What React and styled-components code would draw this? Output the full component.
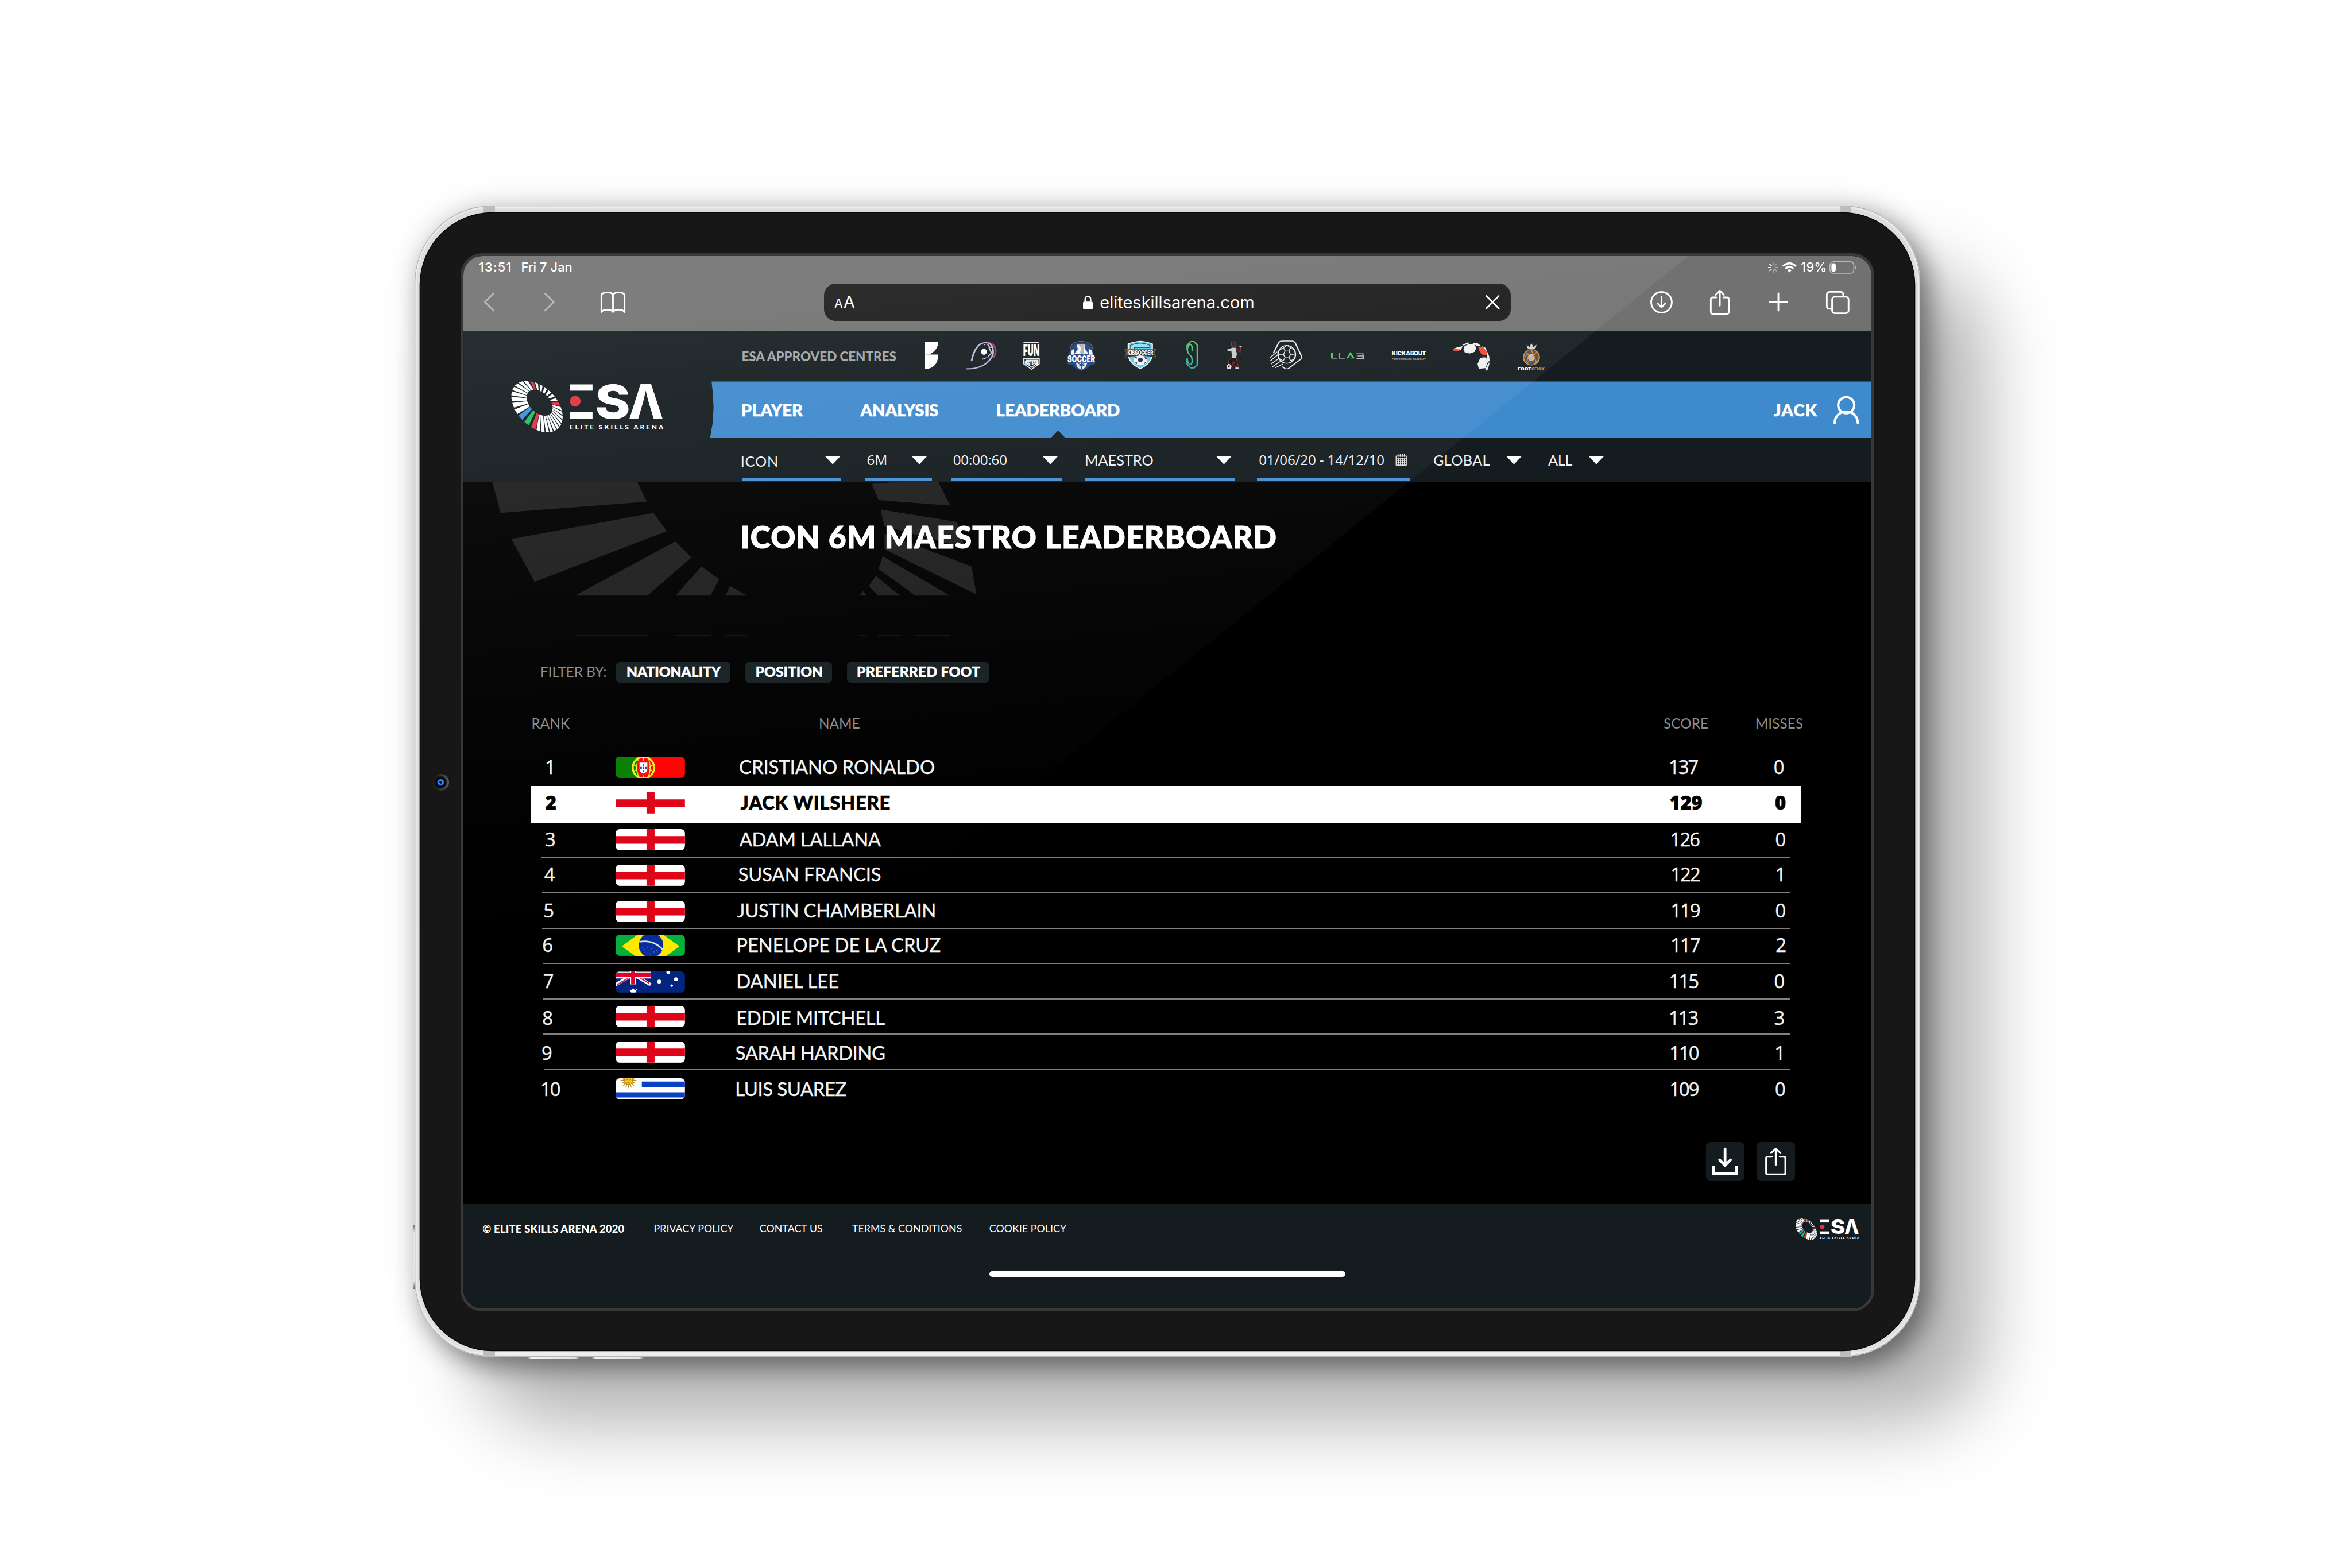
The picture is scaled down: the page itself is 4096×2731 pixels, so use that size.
import React from 'react';
import styled, { createGlobalStyle, css } from 'styled-components';

/* 10 design units = 1rem */
const u = (n) => `${n / 10}rem`;

const SANS = '"Lato", "Liberation Sans", sans-serif';
const DIGITS = '"Open Sans", "Liberation Sans", sans-serif';
const SYSTEM = '"Inter", "Liberation Sans", sans-serif';

const Global = createGlobalStyle`
  html { font-size: 6.826667px; }
  body { margin: 0; background: #fff; overflow: hidden; }
  *, *::before, *::after { box-sizing: border-box; }
  svg { display: block; }
`;

/* ---------- device ---------- */

const Page = styled.div`
  width: 100vw;
  height: 100vh;
  padding: ${u(525)} 0 0 ${u(1058)};
  background: #fff;
`;

const Frame = styled.div`
  position: relative;
  width: ${u(3840)};
  height: ${u(2937)};
  padding: ${u(18)} ${u(14)} ${u(17)};
  border-radius: ${u(196)};
  background: linear-gradient(#c9c9c9 0, #f6f6f6 ${u(5)}, #dcdcde ${u(9)}, #e0e0e2 ${u(2922)}, #f4f4f4 ${u(2930)}, #a8a8a8 100%);
  box-shadow:
    inset 0 0 0 ${u(2)} #b4b4b4,
    inset 0 0 ${u(2)} ${u(6)} #ececec,
    0 0 ${u(80)} rgba(0, 0, 0, 0.15),
    ${u(22)} ${u(26)} ${u(60)} rgba(0, 0, 0, 0.36),
    ${u(160)} ${u(165)} ${u(195)} rgba(0, 0, 0, 0.31);
`;

const Band = styled.i`
  position: absolute;
  width: ${u(28)};
  height: ${u(17)};
  background: #bdbdbf;
  ${(p) => p.$side}: ${u(176)};
  ${(p) => p.$edge}: 0;
`;

const BottomKey = styled.i`
  position: absolute;
  top: 100%;
  left: ${(p) => u(p.$x)};
  width: ${u(133)};
  height: ${u(6)};
  background: linear-gradient(90deg, #777, #f2f2f2 8%, #e2e2e2 92%, #777);
`;

const SideKey = styled.i`
  position: absolute;
  right: 100%;
  top: ${u(2599)};
  width: ${u(5)};
  height: ${u(164)};
  background: linear-gradient(#666, #e4e4e4 12%, #e4e4e4 88%, #666);
`;

const Bezel = styled.div`
  position: relative;
  width: 100%;
  height: 100%;
  padding: ${u(103)} 0 0 ${u(103)};
  border-radius: ${u(184)};
  background: #171717;
  box-shadow: 0 0 0 ${u(2)} #050505;
`;

const Camera = styled.i`
  position: absolute;
  left: ${u(31)};
  top: ${u(1432)};
  width: ${u(42)};
  height: ${u(42)};
  border-radius: 50%;
  background:
    radial-gradient(circle, #0b0b0b 0 9%, #4aa0ff 14%, #1f6fe8 24%, #080808 32%, #0a0a0a 46%, transparent 54%),
    linear-gradient(90deg, #1b1b1b 20%, #565656 95%);
`;

const Screen = styled.div`
  position: relative;
  display: flex;
  flex-direction: column;
  width: ${u(3606)};
  height: ${u(2699)};
  border: ${u(7.5)} solid #383838;
  border-radius: ${u(56)};
  background: #000;
  overflow: hidden;
`;

const Glare = styled.div`
  position: absolute;
  inset: 0;
  pointer-events: none;
  clip-path: polygon(0 0, ${u(3125)} 0, 0 ${u(2524)});
  background: linear-gradient(
    174deg,
    rgba(255, 255, 255, 0.085) ${u(150)},
    rgba(255, 255, 255, 0.058) ${u(420)},
    rgba(255, 255, 255, 0.038) ${u(760)},
    rgba(255, 255, 255, 0.016) ${u(1250)},
    rgba(255, 255, 255, 0) ${u(1750)}
  );
`;

/* ---------- browser chrome ---------- */

const Chrome = styled.div`
  flex: none;
  height: ${u(192)};
  background: #717171;
  color: #fff;
  font-family: ${SYSTEM};
`;

const StatusBar = styled.div`
  display: flex;
  align-items: center;
  height: ${u(58)};
  padding: 0 ${u(37)} 0 ${u(39)};
  font-size: ${u(32)};
  font-weight: 500;
  line-height: 1;
  white-space: nowrap;
`;

const Clock = styled.span`
  letter-spacing: ${u(1.8)};
  margin-right: ${u(23)};
`;

const StatusDate = styled.span`
  letter-spacing: ${u(0.1)};
  margin-right: auto;
`;

const Charge = styled.span`
  margin: 0 ${u(7)} 0 ${u(11)};
  letter-spacing: ${u(0.6)};
`;

const Glyph = styled.svg`
  flex: none;
  width: ${(p) => u(p.$w)};
  height: ${(p) => u(p.$h)};
  margin-left: ${(p) => u(p.$ml || 0)};
  overflow: visible;
  fill: none;
  stroke: ${(p) => p.$c || '#fff'};
  stroke-width: ${(p) => p.$sw || 4.2};
  stroke-linecap: round;
  stroke-linejoin: round;
`;

const Toolbar = styled.div`
  display: grid;
  grid-template-columns: 1fr ${u(1751)} 1fr;
  align-items: center;
  height: ${u(120)};
`;

const ToolsLeft = styled.div`
  display: flex;
  align-items: center;
  padding-left: ${u(53)};
`;

const ToolsRight = styled.div`
  display: flex;
  align-items: center;
  justify-content: flex-end;
  padding-right: ${u(56)};
`;

const AddressBar = styled.div`
  display: grid;
  grid-template-columns: 1fr auto 1fr;
  align-items: center;
  height: ${u(96)};
  padding: 0 ${u(28)} 0 ${u(26)};
  border-radius: ${u(30)};
  background: #191919;
`;

const ReaderButton = styled.span`
  display: flex;
  align-items: baseline;
  gap: ${u(2)};
  font-size: ${u(42)};
  line-height: 1;
  small { font-size: ${u(31)}; }
`;

const Address = styled.span`
  display: flex;
  align-items: center;
  gap: ${u(18)};
  padding-left: ${u(9)};
  font-size: ${u(42.5)};
  line-height: 1;
`;

const Clear = styled(Glyph)`
  justify-self: end;
`;

/* ---------- site header ---------- */

const Header = styled.header`
  flex: none;
  display: grid;
  grid-template-columns: ${u(629)} 1fr;
  height: ${u(383)};
  background: #141c1f;
  color: #fff;
  font-family: ${SANS};
`;

const LogoSlot = styled.div`
  padding: ${u(105)} 0 0 ${u(108)};
`;

const LogoSvg = styled.svg`
  width: ${(p) => u(p.$w)};
  height: ${(p) => u((p.$w * 510) / 1260)};
`;

const HeaderRows = styled.div`
  display: grid;
  grid-template-rows: ${u(128)} ${u(145)} ${u(110)};
`;

const Partners = styled.div`
  display: flex;
  align-items: flex-start;
  padding-left: ${u(80.5)};
`;

const PartnersLabel = styled.span`
  width: ${u(393)};
  padding-top: ${u(49)};
  font-size: ${u(33)};
  font-weight: 900;
  line-height: 1;
  letter-spacing: ${u(-0.1)};
  white-space: nowrap;
  color: #a5a5a5;
`;

const PartnerSvg = styled.svg`
  flex: none;
  width: ${(p) => u(p.$w)};
  height: ${u(76)};
  margin: ${u(25)} 0 0 ${(p) => u(p.$gap)};
  overflow: visible;
`;

const Nav = styled.nav`
  display: flex;
  align-items: stretch;
  padding: 0 ${u(32)} 0 ${u(79.5)};
  background: #3f8acd;
  clip-path: polygon(${u(4)} 0, ${u(7)} 20%, ${u(9)} 45%, ${u(7)} 72%, 0 100%, 100% 100%, 100% 0);
  font-size: ${u(43)};
  font-weight: 900;
  line-height: 1;
  -webkit-text-stroke: ${u(0.9)} #fff;
`;

const NavItem = styled.a`
  position: relative;
  display: flex;
  align-items: center;
  margin-right: ${(p) => u(p.$after || 0)};
  ${(p) =>
    p.$active &&
    css`
      &::after {
        content: '';
        position: absolute;
        left: 50%;
        bottom: 0;
        width: ${u(39)};
        height: ${u(20)};
        margin-left: ${u(-19.5)};
        background: #141c1f;
        clip-path: polygon(50% 0, 100% 100%, 0 100%);
      }
    `}
`;

const User = styled.div`
  display: flex;
  align-items: center;
  gap: ${u(40)};
  margin-left: auto;
  letter-spacing: ${u(1.6)};
`;

const Filters = styled.div`
  display: flex;
  padding-left: ${u(81)};
`;

const Select = styled.div`
  display: flex;
  align-items: center;
  justify-content: space-between;
  width: ${(p) => u(p.$w)};
  margin-right: ${(p) => u(p.$after || 0)};
  padding: ${u(9)} ${(p) => u(p.$r || 0)} 0 ${(p) => u(p.$l || 0)};
  border-bottom: ${u(8)} solid ${(p) => (p.$line ? '#4390d6' : 'transparent')};
  font-family: ${(p) => (p.$digits ? DIGITS : SANS)};
  font-size: ${(p) => u(p.$digits ? 35.5 : 37)};
  letter-spacing: ${(p) => u(p.$ls || 0)};
  line-height: 1;
  white-space: nowrap;
  color: #f2f2f2;
`;

const SelectLabel = styled.span`
  padding-top: ${(p) => u(p.$drop || 0)};
  margin-left: ${(p) => u(p.$ml || 0)};
`;

const Caret = styled.i`
  width: ${u(40)};
  height: ${u(21)};
  background: #fff;
  clip-path: polygon(0 0, 100% 0, 50% 100%);
`;

/* ---------- content ---------- */

const Main = styled.main`
  position: relative;
  flex: none;
  height: ${u(1844)};
  padding: ${u(102)} ${u(177)} 0 ${u(171)};
  font-family: ${SANS};
  color: #f4f4f4;
`;

const Watermark = styled.svg`
  position: absolute;
  left: ${u(-22)};
  top: 0;
  width: ${u(1500)};
  height: ${u(393)};
  fill: #1f1f1f;
`;

const Title = styled.h1`
  position: relative;
  margin: 0 0 0 ${u(535.5)};
  font-size: ${u(78)};
  font-weight: 900;
  line-height: 1;
  letter-spacing: ${u(1.75)};
  white-space: nowrap;
  color: #fff;
  -webkit-text-stroke: ${u(1.8)} #fff;
`;

const FilterBar = styled.div`
  display: flex;
  align-items: center;
  height: ${u(53)};
  margin: ${u(280)} 0 0 ${u(25)};
`;

const FilterLabel = styled.span`
  width: ${u(193)};
  font-size: ${u(35.5)};
  line-height: 1;
  white-space: nowrap;
  color: #8c8c8c;
`;

const Chip = styled.button`
  height: ${u(53)};
  width: ${(p) => u(p.$w)};
  margin: 0 ${u(38.5)} 0 0;
  padding: 0 0 ${u(2)} ${u(2)};
  border: 0;
  border-radius: ${u(10)};
  background: #172023;
  font: 900 ${u(36)} / 1 ${SANS};
  letter-spacing: ${(p) => u(p.$ls || 0)};
  color: #fff;
  -webkit-text-stroke: ${u(0.8)} #fff;
`;

const TableHead = styled.div`
  display: grid;
  grid-template-columns: ${u(733)} 1fr ${u(234)} ${u(121)};
  height: ${u(36)};
  margin: ${u(87)} ${u(-2)} ${u(45)} ${u(2.5)};
  font-size: ${u(35.5)};
  line-height: 1;
  letter-spacing: ${u(0.2)};
  color: #8c8c8c;
`;

const Row = styled.div`
  display: grid;
  grid-template-columns: ${(p) => u(215 - p.$inset)} ${u(306)} 1fr ${u(270)} ${(p) => u(p.$inset ? 42 : 70)};
  align-items: center;
  height: ${(p) => u(p.$h)};
  margin: 0 ${(p) => u(p.$inset ? 30 : 2)} 0 ${(p) => u(p.$inset + 2)};
  border-bottom: ${(p) => (p.$line ? u(4) : '0')} solid #808080;
  font-size: ${u(48)};
  line-height: 1;
  white-space: nowrap;
  -webkit-text-stroke: ${u(0.6)} currentColor;
  ${(p) =>
    p.$current &&
    css`
      background: #fff;
      color: #000;
      font-weight: 900;
      -webkit-text-stroke: ${u(1)} #000;
    `}
`;

const Name = styled.span`
  padding: ${(p) => u(Math.max(0, 2 * p.$dy))} 0 ${(p) => u(Math.max(0, -2 * p.$dy))};
  text-indent: ${(p) => u(p.$x)};
  letter-spacing: ${(p) => u(p.$ls)};
`;

const Digits = styled.span`
  padding: ${(p) => u(Math.max(0, 2 * p.$dy))} 0 ${(p) => u(Math.max(0, -2 * p.$dy))};
  text-indent: ${(p) => u(p.$x)};
  font-family: ${DIGITS};
  font-weight: ${(p) => (p.$bold ? 800 : 500)};
  letter-spacing: ${(p) => u(p.$bold ? 0 : -2.8)};
`;

const FlagBox = styled.span`
  display: block;
  width: ${u(177)};
  height: ${u(54)};
  margin-top: ${(p) => u(p.$dy)};
  border-radius: ${u(11)};
  overflow: hidden;
  svg { width: 100%; height: 100%; }
`;

const Actions = styled.div`
  display: flex;
  gap: ${u(30)};
  justify-content: flex-end;
  margin: ${u(93)} ${u(17)} 0 0;
`;

const Action = styled.button`
  display: flex;
  align-items: center;
  justify-content: center;
  width: ${u(99)};
  height: ${u(100)};
  padding: 0;
  border: 0;
  border-radius: ${u(11)};
  background: #141c1f;
`;

const Footer = styled.footer`
  flex: 1;
  background: #141c1f;
`;

const FooterRow = styled.div`
  display: flex;
  align-items: center;
  height: ${u(126)};
  padding: 0 ${u(24)} 0 ${u(48.5)};
  font: 400 ${u(26)} / 1 ${SANS};
  letter-spacing: ${u(0.1)};
  color: #fff;
`;

const Copyright = styled.strong`
  width: ${u(437)};
  font-size: ${u(27)};
  font-weight: 900;
  letter-spacing: ${u(0.3)};
`;

const FooterLink = styled.a`
  width: ${(p) => u(p.$w)};
  white-space: nowrap;
`;

const FooterLogo = styled.div`
  margin-left: auto;
`;

const HomeBar = styled.div`
  width: ${u(909)};
  height: ${u(15)};
  margin: ${u(45)} auto 0;
  border-radius: ${u(8)};
  background: #fff;
`;

/* ---------- ESA logo ---------- */

const ringPoint = (cx, cy, a, b, deg) => {
  const t = (deg * Math.PI) / 180;
  const p = a * Math.cos(t);
  const q = b * Math.sin(t);
  return `${(cx + (p - q) * Math.SQRT1_2).toFixed(1)},${(cy + (p + q) * Math.SQRT1_2).toFixed(1)}`;
};

const RED = '#df3340';
const ringSegments = (() => {
  const out = [];
  const add = (t, w, shift, c = '#fff') => out.push({ t, w, shift, c });
  add(65, 10.5, 0, RED);
  add(81, 10.5, 1, '#22bf63');
  add(97.5, 11, 1, '#3f8fd6');
  for (let i = 1; i < 9; i += 1) add(97.5 + i * 14.2, 10.6, 1 - i * 1.1);
  add(225.5, 7.5, -9, RED);
  for (let i = 1; i < 7; i += 1) add(225.5 + i * 10.3, 6.6, -9 + i * 2.6);
  add(297.5, 7.5, 9, RED);
  for (let i = 1; i < 12; i += 1) add(297.5 + i * 10.6, 7.8, 9 - i * 0.75);
  return out;
})();

const Logo = ({ width }) => (
  <LogoSvg $w={width} viewBox="0 0 1260 510">
    {ringSegments.map(({ t, w, shift, c }) => (
      <polygon
        key={t}
        fill={c}
        points={[
          ringPoint(238, 260, 233, 152, t - w / 2),
          ringPoint(238, 260, 233, 152, t + w / 2),
          ringPoint(258, 230, 118, 77, t + shift + w / 2),
          ringPoint(258, 230, 118, 77, t + shift - w / 2),
        ].join(' ')}
      />
    ))}
    <rect x="490" y="90" width="173" height="48" fill="#fff" />
    <rect x="490" y="301" width="173" height="51" fill="#fff" />
    <circle cx="531" cy="219" r="41" fill={RED} />
    <text x="682" y="350" fontFamily="Inter, sans-serif" fontWeight="800" fontSize="358" fill="#fff" textLength="270" lengthAdjust="spacingAndGlyphs">S</text>
    <text x="938" y="352" fontFamily="Inter, sans-serif" fontWeight="800" fontSize="360" fill="#fff" textLength="268" lengthAdjust="spacingAndGlyphs">Λ</text>
    <text x="487" y="437" fontFamily="Lato, sans-serif" fontWeight="900" fontSize="52" fill="#fff" letterSpacing="13">ELITE SKILLS ARENA</text>
  </LogoSvg>
);

/* ---------- partner marks ---------- */

const Lettering = ({ x, y, w, size, children, fill = '#fff', font = 'Lato', weight = 900 }) => (
  <text x={x} y={y} textLength={w} lengthAdjust="spacingAndGlyphs" fontFamily={`${font}, sans-serif`} fontWeight={weight} fontSize={size} fill={fill} stroke="none">
    {children}
  </text>
);

const PartnerStrip = () => (
  <>
    <PartnerSvg $w={33.5} $gap={75} viewBox="55 60 63 228" preserveAspectRatio="none">
      <path fill="#fff" d="M55 67H118Q118 128 76 163H118Q118 250 72 271H55Z" />
      <path d="M60 165H92" stroke="#9a9fa1" strokeWidth="4" />
    </PartnerSvg>
    <PartnerSvg $w={79.5} $gap={69} viewBox="248 60 150 228" preserveAspectRatio="none" fill="none">
      <path d="M356 70Q395 84 394 136Q394 165 382 188" stroke="#a8385f" strokeWidth="9" />
      <path d="M278 214C286 150 305 74 345 72C385 72 390 150 372 190C352 240 318 274 252 273" stroke="#b9b7dc" strokeWidth="8" />
      <path d="M338 90Q345 80 356 86L366 108L384 110M362 110L374 150L358 180M330 200L348 188L364 190" stroke="#cfcdea" strokeWidth="6" />
      <ellipse cx="338" cy="142" rx="14" ry="23" fill="#fff" />
    </PartnerSvg>
    <PartnerSvg $w={41} $gap={68.5} viewBox="527 60 78 228" preserveAspectRatio="none" fill="none">
      <path d="M528 71H605M530 194H604V236L567 276L530 236ZM541 206H594V232L567 260L541 232Z" stroke="#e8e8e8" strokeWidth="6" />
      <Lettering x={526} y={176} w={80} size={124} font="Inter">FUN</Lettering>
      <Lettering x={534} y={240} w={66} size={42} font="Inter">FOOTBALL</Lettering>
    </PartnerSvg>
    <PartnerSvg $w={70.5} $gap={71.5} viewBox="740 60 133 228" preserveAspectRatio="none" fill="none">
      <path d="M752 118Q762 62 806 62Q852 62 864 118" stroke="#5d646b" strokeWidth="5" />
      <path d="M807 70C850 70 868 130 866 170L874 236L850 244Q838 276 807 286Q776 276 764 244L740 236L748 170C746 130 764 70 807 70Z" fill="#1f3f7c" />
      <path d="M784 88H826L824 118L842 160H772L790 122ZM760 132L772 120V164H756ZM842 118L858 134L862 164H842Z" fill="#f4f4f4" />
      <path d="M792 84L822 84L818 166L800 150L806 114Z" fill="#b2b2b2" />
      <path d="M744 172H870V222H744Z" fill="#1f3f7c" />
      <path d="M780 226H836L826 262L807 280L788 262Z" fill="#dfe6f3" />
      <path d="M792 232L822 250M820 232L794 252M807 228V278" stroke="#1f3f7c" strokeWidth="5" />
      <Lettering x={740} y={222} w={133} size={72} font="Inter">SOCCER</Lettering>
    </PartnerSvg>
    <PartnerSvg $w={82} $gap={75} viewBox="1015 60 155 228" preserveAspectRatio="none" fill="none">
      <path d="M1092 62Q1120 64 1150 82V178Q1136 240 1092 272Q1048 240 1034 178V82Q1064 64 1092 62Z" fill="#5fc8e4" stroke="#e9f6fa" strokeWidth="6" />
      <path d="M1046 92Q1092 62 1138 92V110H1062V124H1046Z" fill="#8fe2f4" stroke="#20262b" strokeWidth="4" />
      <path d="M1016 124H1168L1158 150L1168 184L1092 170L1018 184L1026 150Z" fill="#23292e" stroke="#5a6167" strokeWidth="3" />
      <ellipse cx="1092" cy="208" rx="33" ry="38" fill="#f2f4f8" />
      <path d="M1080 196L1094 186L1106 198L1100 220H1084ZM1062 188L1074 180L1076 194ZM1112 180L1124 190L1118 206ZM1066 218L1078 226L1074 238ZM1108 228L1118 222L1112 238Z" fill="#20264f" />
      <Lettering x={1030} y={164} w={124} size={46} font="Inter">KISSOCCER</Lettering>
    </PartnerSvg>
    <PartnerSvg $w={30} $gap={76} viewBox="1313 60 57 228" preserveAspectRatio="none" fill="none">
      <defs>
        <linearGradient id="sg" x1="0" y1="0" x2="0" y2="1">
          <stop offset="0" stopColor="#4ecb5c" />
          <stop offset="1" stopColor="#35aeb4" />
        </linearGradient>
      </defs>
      <path d="M1341 136V104Q1336 80 1330 84Q1318 100 1318 128Q1320 156 1336 176Q1344 200 1340 226Q1336 246 1330 238Q1318 230 1317 190M1317 190V238L1334 266H1350L1366 242V92L1350 64H1334L1317 92V128" stroke="url(#sg)" strokeWidth="7" />
    </PartnerSvg>
    <PartnerSvg $w={38} $gap={73} viewBox="0 60 72 228" preserveAspectRatio="none" fill="none">
      <path d="M22 82Q24 62 34 64Q46 66 46 92Q42 108 36 108Q24 108 22 82" stroke="#a92a2a" strokeWidth="4" fill="#2a2224" />
      <path d="M2 126L28 110L44 112L50 160L46 188H26L24 140L6 136Z" fill="#c9c9c9" />
      <path d="M50 120L66 144L68 96" stroke="#9c2b2b" strokeWidth="4" />
      <circle cx="68" cy="102" r="6" fill="#cfcfcf" />
      <path d="M26 190H46L58 258H44L34 210L26 250H8L12 204Z" fill="#101010" stroke="#a32626" strokeWidth="3" />
      <ellipse cx="12" cy="256" rx="12" ry="20" fill="#e2e2e2" />
      <path d="M44 260L60 264V272H42Z" fill="#d5d5d5" />
      <path d="M6 248L16 246L14 264L8 262Z" fill="#222" />
    </PartnerSvg>
    <PartnerSvg $w={84} $gap={72} viewBox="203 60 159 228" preserveAspectRatio="none" fill="none" stroke="#ececec">
      <path d="M222 150L248 70Q252 60 262 60H312Q322 62 326 72L356 172Q360 184 356 196L296 268Q288 278 278 270L262 256" strokeWidth="6.5" />
      <ellipse cx="286" cy="162" rx="42" ry="68" strokeWidth="6.5" />
      <path d="M278 136H296L304 162L296 188H278L270 162ZM278 136L270 112L282 98M296 136L304 112L292 98M304 162L324 162M270 162L248 162M278 188L268 212M296 188L306 212M304 112L322 128M270 112L252 128M268 212L252 196M306 212L320 196" strokeWidth="4.5" />
      <path d="M204 188L240 142M206 212L244 164M210 236L250 190M216 258L258 212M230 264L268 236" strokeWidth="5.5" />
    </PartnerSvg>
    <PartnerSvg $w={85} $gap={73} viewBox="500 60 161 228" preserveAspectRatio="none" fill="none">
      <path d="M504 150V192M540 150V192M578 192L594 154L610 192" stroke="#45d957" strokeWidth="8" />
      <path d="M502 194H530M538 194H566M592 190H614M622 153H654V194H622M624 174H656" stroke="#77717b" strokeWidth="7" />
      <path d="M630 174H658V194H626" stroke="#b9b9b9" strokeWidth="6" />
    </PartnerSvg>
    <PartnerSvg $w={86.5} $gap={69.5} viewBox="792 60 163 228" preserveAspectRatio="none">
      <Lettering x={791} y={168} w={165} size={45} font="Inter">KICKABOUT</Lettering>
      <path d="M792 182H955" stroke="#6d7375" strokeWidth="3" />
      <Lettering x={792} y={205} w={163} size={17} fill="#a5a8a9" font="Inter" weight={600}>PERFORMANCE ACADEMY</Lettering>
    </PartnerSvg>
    <PartnerSvg $w={94.5} $gap={69.5} viewBox="1087 60 178 228" preserveAspectRatio="none">
      <path fill="#f1f1f1" d="M1088 122L1110 106L1134 100L1126 128L1104 124ZM1132 90L1160 70L1168 76L1140 94ZM1144 98L1166 82L1190 84L1200 112L1192 142L1168 156L1144 146L1138 120ZM1178 74H1204L1224 98L1206 100ZM1228 100L1244 112L1262 176L1264 214L1252 220L1250 160ZM1218 192L1246 184L1256 218L1244 268L1212 272L1206 236ZM1258 226L1264 226L1256 276L1244 290L1244 276Z" />
      <path fill="#f4482d" d="M1088 122L1124 124L1116 136L1088 134ZM1210 102L1232 104L1252 142L1248 170L1232 168L1212 132ZM1228 176L1248 180V190H1230Z" />
    </PartnerSvg>
    <PartnerSvg $w={69} $gap={70} viewBox="1397 60 130 228" preserveAspectRatio="none" fill="none">
      <path fill="#cfd2d3" d="M1440 88L1454 108L1458 92L1463 76L1468 92L1472 108L1488 88L1482 122H1446Z" />
      <ellipse cx="1463" cy="184" rx="38" ry="60" fill="#4d4f52" stroke="#e08a2c" strokeWidth="6" />
      <ellipse cx="1463" cy="186" rx="17" ry="26" fill="#bfc0c2" />
      <path d="M1434 150L1452 160L1440 220M1490 140L1440 236M1462 126L1488 224M1430 180L1450 160M1476 236L1500 200" stroke="#e08a2c" strokeWidth="4.5" />
      <Lettering x={1397} y={286} w={66} size={30} font="Inter">FOOT</Lettering>
      <Lettering x={1463} y={286} w={42} size={30} fill="#7f8486" font="Inter">GEN</Lettering>
      <Lettering x={1505} y={286} w={22} size={30} fill="#e08a2c" font="Inter">IK</Lettering>
    </PartnerSvg>
  </>
);

/* ---------- flags ---------- */

const England = () => (
  <svg viewBox="0 0 177 54" preserveAspectRatio="none">
    <rect width="177" height="54" fill="#fff" />
    <path fill="#e00418" d="M0 18H177V37.5H0ZM79 0H99.5V54H79Z" />
  </svg>
);

const Portugal = () => (
  <svg viewBox="0 0 178 54" preserveAspectRatio="none">
    <rect width="178" height="54" fill="#ff0201" />
    <rect width="58" height="54" fill="#068004" />
    <circle cx="71.5" cy="28" r="27.5" fill="none" stroke="#f4ec20" strokeWidth="5" />
    <path d="M46 20Q71 42 97 20M46 38Q71 18 97 38M71.5 0V54M60 3Q48 28 60 52M83 3Q95 28 83 52" fill="none" stroke="#f4ec20" strokeWidth="2.6" />
    <path d="M56 10H87V32Q85 46 71.5 48Q58 46 56 32Z" fill="#f01018" />
    <path d="M61.5 15H81.5V32Q80 41 71.5 43Q63 41 61.5 32Z" fill="#fff" />
    <path d="M69.5 18h4v5h-4zM69.5 26h4v5h-4zM69.5 34h4v5h-4zM63.5 26h4v5h-4zM75.5 26h4v5h-4z" fill="#1741b0" />
  </svg>
);

const Brazil = () => (
  <svg viewBox="0 0 178 54" preserveAspectRatio="none">
    <rect width="178" height="54" fill="#04b13c" />
    <path d="M16 29.5L58 -1L90 -20L121 -1L164 29.5L122 60H58Z" fill="#ffe800" />
    <circle cx="91" cy="27" r="31.5" fill="#0b2c9c" />
    <path d="M61 18Q98 12 121 38" fill="none" stroke="#cfead9" strokeWidth="4" />
    <path d="M68 32h1.5M74 38h1.5M80 33h1.5M86 42h1.5M92 36h1.5M98 44h1.5M76 46h1.5M104 40h1.5M88 49h1.5M108 46h1.5" stroke="#8fa4dc" strokeWidth="2" />
  </svg>
);

const Australia = () => (
  <svg viewBox="0 0 178 54" preserveAspectRatio="none">
    <rect width="178" height="54" fill="#02257f" />
    <path d="M0 34L36 13M90 34L54 13M20 -3L36 6M70 -3L54 6" stroke="#fff" strokeWidth="8" />
    <path d="M4 34L36 15M86 30L58 14" stroke="#e8112d" strokeWidth="3" />
    <path d="M0 0H90V18H0ZM37 0H53V33H37Z" fill="#fff" />
    <path d="M0 0H38V2H0ZM53 0H90V2H53Z" fill="#6b7fb4" />
    <path d="M0 4H90V14H0ZM40 0H50V33H40Z" fill="#e4002b" />
    <path d="M36 45L41 48L45 42L49 48L55 45L51 54H40Z" fill="#fff" />
    <g fill="#fff">
      <ellipse cx="112" cy="26" rx="5" ry="5" />
      <ellipse cx="135" cy="2" rx="4.5" ry="5" />
      <ellipse cx="155" cy="20" rx="5" ry="5" />
      <circle cx="144" cy="36" r="3.2" />
    </g>
  </svg>
);

const sunRays = Array.from({ length: 16 }, (_, i) => (i * Math.PI) / 8);

const Uruguay = () => (
  <svg viewBox="0 0 177 54" preserveAspectRatio="none">
    <rect width="177" height="54" fill="#fff" />
    <path d="M67 8.5H177V22H67ZM0 36H177V49H0Z" fill="#0741c4" />
    {sunRays.map((a) => (
      <path
        key={a}
        d={`M${33 + 8 * Math.cos(a + 0.3)} ${5 + 8 * Math.sin(a + 0.3)}L${33 + 22 * Math.cos(a)} ${5 + 22 * Math.sin(a)}L${33 + 8 * Math.cos(a - 0.3)} ${5 + 8 * Math.sin(a - 0.3)}Z`}
        fill="#b98a1f"
      />
    ))}
    <circle cx="33" cy="5" r="9.5" fill="#f3cb16" />
    <path d="M27 4h4M35 4h4M29 10Q33 12 37 10" stroke="#a87a12" strokeWidth="1.4" fill="none" />
  </svg>
);

/* ---------- data ---------- */

const rows = [
  { rank: '1', flag: Portugal, name: 'CRISTIANO RONALDO', score: '137', misses: '0', h: 96, inset: 0, rx: 35, nx: 9, sx: 2, mx: 0, dy: 0, fy: 0, ls: 0 },
  { rank: '2', flag: England, name: 'JACK WILSHERE', score: '129', misses: '0', h: 94, inset: 0, current: true, rx: 36, nx: 13, sx: 4, mx: 3, dy: -3.5, fy: -4, ls: 1.05 },
  { rank: '3', flag: England, name: 'ADAM LALLANA', score: '126', misses: '0', h: 90, inset: 26, line: true, rx: 9, nx: 10, sx: 6, mx: 4, dy: -0.5, fy: 0, ls: -0.4 },
  { rank: '4', flag: England, name: 'SUSAN FRANCIS', score: '122', misses: '1', h: 90.2, inset: 27, line: true, rx: 6, nx: 7, sx: 7, mx: 4, dy: -1, fy: 0, ls: -0.1 },
  { rank: '5', flag: England, name: 'JUSTIN CHAMBERLAIN', score: '119', misses: '0', h: 90.2, inset: 28, line: true, rx: 3, nx: 4, sx: 7, mx: 4, dy: 1, fy: 2.5, ls: -0.35 },
  { rank: '6', flag: Brazil, name: 'PENELOPE DE LA CRUZ', score: '117', misses: '2', h: 90.2, inset: 29, line: true, rx: -1, nx: 2, sx: 7, mx: 5, dy: -1, fy: -1, ls: 0 },
  { rank: '7', flag: Australia, name: 'DANIEL LEE', score: '115', misses: '0', h: 90.2, inset: 30, line: true, rx: 0, nx: 2, sx: 3, mx: 1, dy: 1, fy: 2.5, ls: 0.1 },
  { rank: '8', flag: England, name: 'EDDIE MITCHELL', score: '113', misses: '3', h: 90.2, inset: 31, line: true, rx: -3, nx: 2, sx: 2, mx: 1, dy: 3.5, fy: 0, ls: -0.4 },
  { rank: '9', flag: England, name: 'SARAH HARDING', score: '110', misses: '1', h: 90.2, inset: 32, line: true, rx: -6, nx: 0, sx: 4, mx: 2, dy: 3.5, fy: 0, ls: -0.65 },
  { rank: '10', flag: Uruguay, name: 'LUIS SUAREZ', score: '109', misses: '0', h: 90.2, inset: 32, rx: -9, nx: -1, sx: 4, mx: 3, dy: 3.5, fy: 2.5, ls: -0.6 },
];

export default function App() {
  return (
    <>
      <Global />
      <Page>
        <Frame>
          <Band $side="left" $edge="top" />
          <Band $side="right" $edge="top" />
          <Band $side="left" $edge="bottom" />
          <Band $side="right" $edge="bottom" />
          <BottomKey $x={287} />
          <BottomKey $x={451} />
          <SideKey />
          <Bezel>
            <Camera />
            <Screen>
              <Chrome>
                <StatusBar>
                  <Clock>13:51</Clock>
                  <StatusDate>Fri 7 Jan</StatusDate>
                  <Glyph $w={26} $h={26} $sw={2.6} viewBox="0 0 26 26">
                    <path d="M13 1V7" opacity=".35" />
                    <path d="M21.5 4.5L17.3 8.7" opacity=".3" />
                    <path d="M25 13H19" opacity=".45" />
                    <path d="M21.5 21.5L17.3 17.3" opacity=".5" />
                    <path d="M13 25V19" opacity=".6" />
                    <path d="M4.5 21.5L8.7 17.3" opacity=".75" />
                    <path d="M1 13H7" opacity=".9" />
                    <path d="M4.5 4.5L8.7 8.7" />
                  </Glyph>
                  <Glyph $w={36} $h={26} $ml={11} $sw={5} viewBox="0 0 36 26">
                    <path strokeLinecap="butt" d="M1.5 9.5Q18 -4.5 34.5 9.5M7.5 15.8Q18 7 28.5 15.8" />
                    <path d="M12.5 20Q18 15.5 23.5 20L18 25.5Z" fill="#fff" stroke="none" />
                  </Glyph>
                  <Charge>19%</Charge>
                  <Glyph $w={69} $h={32} $sw={2.4} viewBox="0 0 69 32">
                    <rect x="1.2" y="1.2" width="61" height="29.6" rx="9" stroke="#b9b9b9" />
                    <rect x="5" y="5" width="11" height="22" rx="5" fill="#fff" stroke="none" />
                    <path d="M66 11Q69 13 69 16Q69 19 66 21Z" fill="#b9b9b9" stroke="none" />
                  </Glyph>
                </StatusBar>
                <Toolbar>
                  <ToolsLeft>
                    <Glyph $w={26} $h={47} $c="#b0b0b0" viewBox="0 0 26 47"><path d="M24 2L2 23.5L24 45" /></Glyph>
                    <Glyph $w={26} $h={47} $ml={127} $c="#b0b0b0" viewBox="0 0 26 47"><path d="M2 2L24 23.5L2 45" /></Glyph>
                    <Glyph $w={63} $h={54} $ml={118} viewBox="0 0 63 54">
                      <path d="M31.5 8C27 0 7 0 2 8V52C7 44 27 44 31.5 52C36 44 56 44 61 52V8C56 0 36 0 31.5 8ZM31.5 8V52" />
                    </Glyph>
                  </ToolsLeft>
                  <AddressBar>
                    <ReaderButton><small>A</small>A</ReaderButton>
                    <Address>
                      <Glyph $w={25} $h={35} $sw={3.6} viewBox="0 0 25 35">
                        <rect x="0" y="15" width="25" height="20" rx="3.5" fill="#fff" stroke="none" />
                        <path d="M5.5 16V9Q5.5 2 12.5 2Q19.5 2 19.5 9V16" />
                      </Glyph>
                      eliteskillsarena.com
                    </Address>
                    <Clear $w={36} $h={36} $sw={4} viewBox="0 0 36 36"><path d="M2 2L34 34M34 2L2 34" /></Clear>
                  </AddressBar>
                  <ToolsRight>
                    <Glyph $w={57} $h={57} viewBox="0 0 57 57">
                      <circle cx="28.5" cy="28.5" r="26.3" />
                      <path d="M28.5 15V41M18.5 31.5L28.5 41.5L38.5 31.5" />
                    </Glyph>
                    <Glyph $w={50} $h={64} $ml={95} viewBox="0 0 50 64">
                      <path d="M16 19H7Q2 19 2 24V56Q2 61 7 61H43Q48 61 48 56V24Q48 19 43 19H34M25 40V3M14.5 12.5L25 2L35.5 12.5" />
                    </Glyph>
                    <Glyph $w={47} $h={47} $ml={101} viewBox="0 0 47 47"><path d="M23.5 1.5V45.5M1.5 23.5H45.5" /></Glyph>
                    <Glyph $w={59} $h={58} $ml={99} viewBox="0 0 59 58">
                      <rect x="15.5" y="14.5" width="42" height="42" rx="7" />
                      <path d="M14 45H9Q2 45 2 38V9Q2 2 9 2H37Q44 2 44 9V13" />
                    </Glyph>
                  </ToolsRight>
                </Toolbar>
              </Chrome>

              <Header>
                <LogoSlot><Logo width={420} /></LogoSlot>
                <HeaderRows>
                  <Partners>
                    <PartnersLabel>ESA APPROVED CENTRES</PartnersLabel>
                    <PartnerStrip />
                  </Partners>
                  <Nav>
                    <NavItem $after={147}>PLAYER</NavItem>
                    <NavItem $after={147}>ANALYSIS</NavItem>
                    <NavItem $active>LEADERBOARD</NavItem>
                    <User>
                      JACK
                      <Glyph $w={65} $h={71} $sw={6} viewBox="0 0 65 71">
                        <ellipse cx="32.5" cy="23" rx="20.5" ry="20.5" />
                        <path d="M3 69C3 30 62 30 62 69" />
                      </Glyph>
                    </User>
                  </Nav>
                  <Filters>
                    <Select $w={252} $after={63} $line $ls={1.2}><SelectLabel $drop={5} $ml={-3}>ICON</SelectLabel><Caret /></Select>
                    <Select $w={170} $after={50} $line $digits $l={4} $r={12}><SelectLabel>6M</SelectLabel><Caret /></Select>
                    <Select $w={282} $after={58} $line $digits $l={4} $r={10} $ls={-0.3}><SelectLabel>00:00:60</SelectLabel><Caret /></Select>
                    <Select $w={383} $after={56.5} $line $r={8}><SelectLabel>MAESTRO</SelectLabel><Caret /></Select>
                    <Select $w={390.5} $after={59} $line $digits $l={4.5} $r={8} $ls={-0.25}>
                      <SelectLabel>01/06/20 - 14/12/10</SelectLabel>
                      <Glyph $w={30} $h={30} $sw={2.4} $c="#dcdcdc" viewBox="0 0 30 30">
                        <path d="M2 5H28V28H2ZM2 10H28M8 11V28M13 11V28M18 11V28M23 11V28M2 16H28M2 22H28M7 1V6M12.5 1V6M18 1V6M23 1V6" />
                      </Glyph>
                    </Select>
                    <Select $w={226} $after={67} $ls={0.5}><SelectLabel>GLOBAL</SelectLabel><Caret /></Select>
                    <Select $w={143} $ls={-0.5}><SelectLabel>ALL</SelectLabel><Caret /></Select>
                  </Filters>
                </HeaderRows>
              </Header>

              <Main>
                <Watermark viewBox="0 64 1568 880" preserveAspectRatio="none">
                  <path d="M100 64H486L512 178L122 242ZM151 391L530 242L565 347L213 636ZM588 405L631 497L514 714H321ZM658 547L705 622L682 714H589ZM734 659L779 714H722ZM1112 76L1160 68L1200 64H1289L1321 200L1130 169ZM1136 223L1339 293L1360 440L1145 318ZM1146 362L1378 548L1391 708L1146 450ZM1141 490L1320 714H1228L1130 563ZM1123 602L1187 714H1128L1104 660ZM1089 690L1099 714H1079Z" />
                  <path opacity=".6" d="M321 939.5H514V943H321ZM589 939.5H682V943H589ZM722 939.5H779V943H722ZM1079 939.5H1099V943H1079ZM1128 939.5H1187V943H1128ZM1228 939.5H1320V943H1228Z" />
                </Watermark>
                <Title>ICON 6M MAESTRO LEADERBOARD</Title>
                <FilterBar>
                  <FilterLabel>FILTER BY:</FilterLabel>
                  <Chip $w={292}>NATIONALITY</Chip>
                  <Chip $w={221}>POSITION</Chip>
                  <Chip $w={362} $ls={0.35}>PREFERRED FOOT</Chip>
                </FilterBar>
                <TableHead>
                  <span>RANK</span>
                  <span>NAME</span>
                  <span>SCORE</span>
                  <span>MISSES</span>
                </TableHead>
                {rows.map((r) => {
                  const Flag = r.flag;
                  return (
                    <Row key={r.rank} $h={r.h} $inset={r.inset} $line={r.line} $current={r.current}>
                      <Digits $x={r.rx} $dy={r.dy} $bold={r.current}>{r.rank}</Digits>
                      <FlagBox $dy={2 * r.fy}><Flag /></FlagBox>
                      <Name $x={r.nx} $dy={r.dy} $ls={r.ls}>{r.name}</Name>
                      <Digits $x={r.sx} $dy={r.dy} $bold={r.current}>{r.score}</Digits>
                      <Digits $x={r.mx} $dy={r.dy} $bold={r.current}>{r.misses}</Digits>
                    </Row>
                  );
                })}
                <Actions>
                  <Action>
                    <Glyph $w={65} $h={70} $sw={7} viewBox="0 0 65 70">
                      <path strokeLinecap="butt" strokeLinejoin="miter" d="M3.5 46V66.5H61.5V46" />
                      <path d="M32.5 3V43M18.5 31L32.5 45L46.5 31" />
                    </Glyph>
                  </Action>
                  <Action>
                    <Glyph $w={54} $h={70} $sw={4.6} viewBox="0 0 54 70">
                      <path d="M17 23H6Q2.5 23 2.5 27V64Q2.5 68 6 68H48Q51.5 68 51.5 64V27Q51.5 23 48 23H37M27 44V3M15 13.5L27 2.5L39 13.5" />
                    </Glyph>
                  </Action>
                </Actions>
              </Main>

              <Footer>
                <FooterRow>
                  <Copyright>© ELITE SKILLS ARENA 2020</Copyright>
                  <FooterLink $w={270}>PRIVACY POLICY</FooterLink>
                  <FooterLink $w={236}>CONTACT US</FooterLink>
                  <FooterLink $w={350}>TERMS &amp; CONDITIONS</FooterLink>
                  <FooterLink $w={200}>COOKIE POLICY</FooterLink>
                  <FooterLogo><Logo width={175.4} /></FooterLogo>
                </FooterRow>
                <HomeBar />
              </Footer>
              <Glare />
            </Screen>
          </Bezel>
        </Frame>
      </Page>
    </>
  );
}
